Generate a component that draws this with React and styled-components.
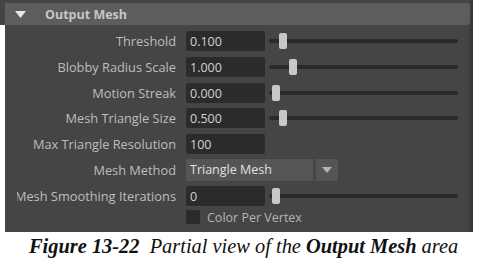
import styled, { createGlobalStyle } from 'styled-components';

const GlobalStyle = createGlobalStyle`
    html, body {
        margin: 0;
        background: #ffffff;
    }
`;

const rows = [
    { label: 'Threshold', value: '0.100', slider: 10 },
    { label: 'Blobby Radius Scale', value: '1.000', slider: 20 },
    { label: 'Motion Streak', value: '0.000', slider: 3 },
    { label: 'Mesh Triangle Size', value: '0.500', slider: 10 },
    { label: 'Max Triangle Resolution', value: '100' },
    { label: 'Mesh Method', select: 'Triangle Mesh' },
    { label: 'Mesh Smoothing Iterations', value: '0', slider: 3 },
];

function Slider({ pos }) {
    return (
        <Track>
            <Thumb style={{ left: pos }} />
        </Track>
    );
}

function App() {
    return (
        <Page>
            <GlobalStyle />
            <Frame>
                <Panel>
                    <Header>
                        <Arrow viewBox="0 0 11 7">
                            <path d="M0 0 H11 L5.5 7 Z" fill="#e6e6e6" />
                        </Arrow>
                        <Title>Output Mesh</Title>
                    </Header>
                    <Body>
                        {rows.map((r) => (
                            <Row key={r.label}>
                                <Label><span>{r.label}</span></Label>
                                {r.select ? (
                                    <Select>
                                        <SelectValue>{r.select}</SelectValue>
                                        <SelectButton>
                                            <svg width="10" height="6" viewBox="0 0 10 6">
                                                <path d="M0 0 H10 L5 6 Z" fill="#b4b4b4" />
                                            </svg>
                                        </SelectButton>
                                    </Select>
                                ) : (
                                    <Field>{r.value}</Field>
                                )}
                                {r.slider !== undefined && <Slider pos={r.slider} />}
                            </Row>
                        ))}
                        <CheckRow>
                            <Label />
                            <Box />
                            <CheckText>Color Per Vertex</CheckText>
                        </CheckRow>
                    </Body>
                </Panel>
            </Frame>
            <Caption>
                <b>Figure 13-22</b>&nbsp; Partial view of the <b>Output Mesh</b> area
            </Caption>
        </Page>
    );
}

const Page = styled.div`
    width: 478px;
    height: 278px;
    overflow: hidden;
`;

const Frame = styled.div`
    width: 473px;
    padding-left: 5px;
    box-sizing: border-box;
    background: linear-gradient(#444444 0 25px, #ffffff 25px);
`;

const Panel = styled.div`
    height: 232px;
    box-sizing: border-box;
    padding-top: 3px;
    background: #454545;
    border-right: 4px solid #3b3b3b;
    font-family: "Open Sans", "Noto Sans", sans-serif;
`;

const Header = styled.div`
    display: flex;
    align-items: center;
    height: 22px;
    margin-right: -1px;
    background: #5d5d5d;
    border-radius: 0 2px 2px 0;
`;

const Arrow = styled.svg`
    width: 11px;
    height: 7px;
    margin-left: 10px;
`;

const Title = styled.span`
    margin-left: 19px;
    font-size: 12.5px;
    font-weight: 700;
    color: #c6c6c6;
`;

const Body = styled.div`
    display: flex;
    flex-direction: column;
    gap: 5.75px;
    padding: 6px 0 0 12px;
`;

const Row = styled.div`
    display: flex;
    align-items: center;
    height: 20px;
`;

const CheckRow = styled(Row)`
    height: 14px;
    margin-top: -1px;
`;

const Label = styled.div`
    display: flex;
    justify-content: flex-end;
    width: 159px;
    flex: none;
    overflow: hidden;
    margin-right: 10px;
    white-space: nowrap;
    font-size: 12.8px;
    color: #bdbdbd;
`;

const Field = styled.div`
    width: 79px;
    height: 20px;
    box-sizing: border-box;
    padding-left: 4px;
    line-height: 21px;
    background: #2b2b2b;
    border-radius: 2px;
    font-size: 12.5px;
    color: #d2d2d2;
`;

const Track = styled.div`
    position: relative;
    width: 189px;
    height: 4px;
    margin-left: 4px;
    background: #2a2a2a;
    border-radius: 2px;
`;

const Thumb = styled.div`
    position: absolute;
    top: -6px;
    width: 8px;
    height: 16px;
    background: #c8c8c8;
    border-radius: 2px;
`;

const Select = styled.div`
    display: flex;
    gap: 3px;
    height: 22px;
    flex: none;
`;

const SelectValue = styled.div`
    width: 127px;
    padding-left: 4px;
    box-sizing: border-box;
    line-height: 22px;
    background: #555555;
    border-radius: 2px 0 0 2px;
    font-size: 12.5px;
    color: #e0e0e0;
`;

const SelectButton = styled.div`
    display: flex;
    align-items: center;
    justify-content: center;
    width: 22px;
    background: #555555;
    border-radius: 0 2px 2px 0;
`;

const Box = styled.div`
    width: 14px;
    height: 14px;
    background: #2b2b2b;
    border-radius: 1px;
`;

const CheckText = styled.span`
    margin-left: 7px;
    font-size: 12.5px;
    color: #b4b4b4;
`;

const Caption = styled.div`
    margin-top: 3px;
    padding-left: 29px;
    font-family: "Liberation Serif", serif;
    font-style: italic;
    font-size: 20.4px;
    color: #111111;
    white-space: nowrap;

    b {
        font-weight: 700;
    }
`;

export default App;
